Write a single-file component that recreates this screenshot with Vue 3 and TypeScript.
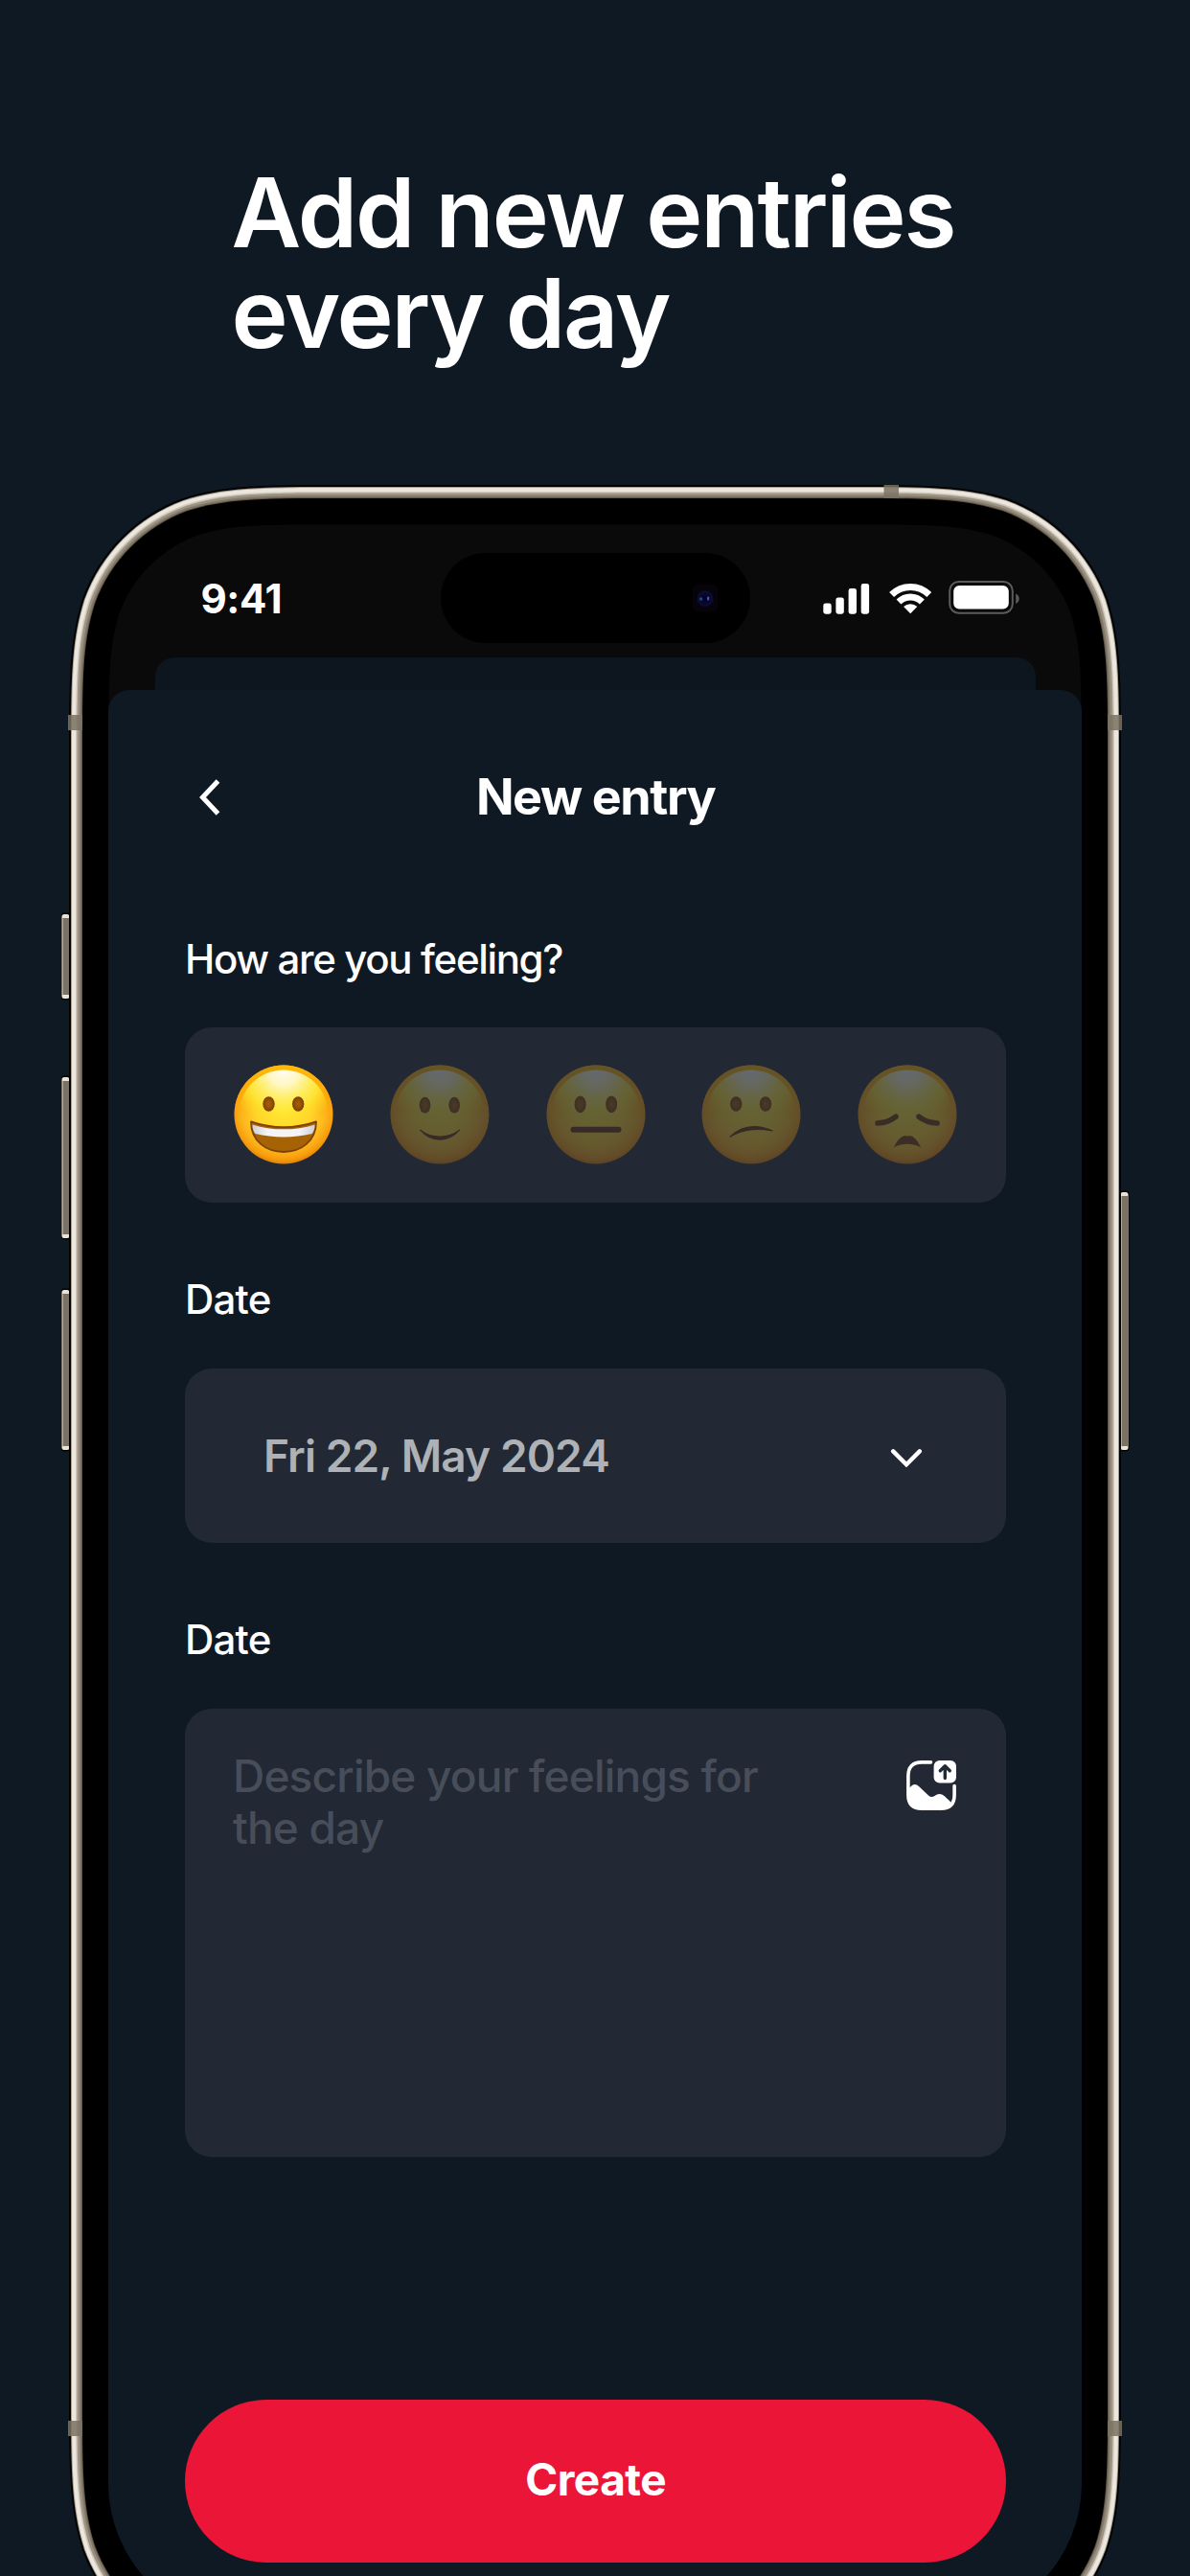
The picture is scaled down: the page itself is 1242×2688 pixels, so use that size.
<script setup lang="ts">
interface Mood {
  name: 'grin' | 'smile' | 'neutral' | 'confused' | 'sad'
  label: string
}

const moods: Mood[] = [
  { name: 'grin', label: 'Great' },
  { name: 'smile', label: 'Good' },
  { name: 'neutral', label: 'Okay' },
  { name: 'confused', label: 'Meh' },
  { name: 'sad', label: 'Bad' },
]
const selected: Mood['name'] = 'grin'

const WIDTH = 1098
const HEIGHT = 2274

// Continuous-curvature rounded rectangle, inset evenly from the phone's outline.
function squircle(inset: number, r: number): string {
  const x0 = inset
  const y0 = inset
  const x1 = WIDTH - inset
  const y1 = HEIGHT - inset
  const a = 1.528665 * r
  const b = 1.088493 * r
  const c = 0.868407 * r
  const d = 0.631494 * r
  const e = 0.074911 * r
  const f = 0.372824 * r
  const g = 0.16906 * r
  return [
    `M${x0 + a} ${y0}H${x1 - a}`,
    `C${x1 - b} ${y0} ${x1 - c} ${y0} ${x1 - d} ${y0 + e}`,
    `C${x1 - f} ${y0 + g} ${x1 - g} ${y0 + f} ${x1 - e} ${y0 + d}`,
    `C${x1} ${y0 + c} ${x1} ${y0 + b} ${x1} ${y0 + a}`,
    `V${y1 - a}`,
    `C${x1} ${y1 - b} ${x1} ${y1 - c} ${x1 - e} ${y1 - d}`,
    `C${x1 - g} ${y1 - f} ${x1 - f} ${y1 - g} ${x1 - d} ${y1 - e}`,
    `C${x1 - c} ${y1} ${x1 - b} ${y1} ${x1 - a} ${y1}`,
    `H${x0 + a}`,
    `C${x0 + b} ${y1} ${x0 + c} ${y1} ${x0 + d} ${y1 - e}`,
    `C${x0 + f} ${y1 - g} ${x0 + g} ${y1 - f} ${x0 + e} ${y1 - d}`,
    `C${x0} ${y1 - c} ${x0} ${y1 - b} ${x0} ${y1 - a}`,
    `V${y0 + a}`,
    `C${x0} ${y0 + b} ${x0} ${y0 + c} ${x0 + e} ${y0 + d}`,
    `C${x0 + g} ${y0 + f} ${x0 + f} ${y0 + g} ${x0 + d} ${y0 + e}`,
    `C${x0 + c} ${y0} ${x0 + b} ${y0} ${x0 + a} ${y0}Z`,
  ].join('')
}

const shells = [
  { inset: 0, r: 188, fill: '#020202' },
  { inset: 2, r: 186, fill: '#a69d8e' },
  { inset: 3, r: 185, fill: '#ece7de' },
  { inset: 7, r: 181, fill: '#cfc7ba' },
  { inset: 8.5, r: 179.5, fill: '#9d9384' },
  { inset: 11, r: 177, fill: '#837969' },
  { inset: 13, r: 175, fill: '#5b5447' },
  { inset: 14, r: 174, fill: '#000000' },
  { inset: 41.5, r: 147, fill: '#0a0a0a' },
].map((s) => ({ d: squircle(s.inset, s.r), fill: s.fill }))

const sideKeys = [
  { x: -7.5, y: 448, h: 88 },
  { x: -7.5, y: 618, h: 168 },
  { x: -7.5, y: 840, h: 167 },
  { x: 1097.5, y: 738, h: 269 },
]

const bands = [
  { x: -1, y: 240, w: 15, h: 16 },
  { x: 1084, y: 240, w: 15, h: 16 },
  { x: -1, y: 2020, w: 15, h: 16 },
  { x: 1084, y: 2020, w: 15, h: 16 },
  { x: 850.5, y: 0, w: 15.5, h: 14 },
]
</script>

<template>
  <main class="page">
    <h1 class="headline">Add new entries<br />every day</h1>

    <section class="phone">
      <svg class="frame" viewBox="-10 0 1118 2274" width="1118" height="2274" aria-hidden="true">
        <g v-for="(k, i) in sideKeys" :key="'k' + i">
          <rect :x="k.x - 0.5" :y="k.y - 1.5" width="9.5" :height="k.h + 3" rx="3" fill="#020202" />
          <rect :x="k.x" :y="k.y" width="8" :height="k.h" rx="2.5" fill="#e9e3d8" />
          <rect :x="k.x + 1" :y="k.y + 4" width="6.5" :height="k.h - 8" fill="#7b7263" />
        </g>
        <path v-for="(s, i) in shells" :key="'s' + i" :d="s.d" :fill="s.fill" />
        <rect
          v-for="(b, i) in bands"
          :key="'b' + i"
          :x="b.x"
          :y="b.y"
          :width="b.w"
          :height="b.h"
          fill="#7a7263"
          fill-opacity="0.85"
        />
      </svg>

      <div class="screen">
        <header class="status">
          <span class="time">9:41</span>
          <div class="island">
            <svg width="26" height="28" viewBox="0 0 26 28">
              <rect width="26" height="28" rx="5" fill="#06030a" />
              <circle cx="13" cy="14.5" r="8.6" fill="#0e0b2b" />
              <circle cx="13" cy="14.5" r="6" fill="#07063a" />
              <circle cx="13" cy="14.5" r="3" fill="#03031c" />
              <circle cx="8.6" cy="15" r="1.8" fill="#1d4a73" />
              <rect x="15" y="12.5" width="2.2" height="4" rx="1" fill="#5051b0" />
            </svg>
          </div>
          <svg class="radios" width="206" height="36" viewBox="859 606 206 36" fill="#fff">
            <rect x="859.3" y="629.5" width="8.4" height="11.2" rx="2.4" />
            <rect x="872.4" y="623.4" width="8.4" height="17.3" rx="2.4" />
            <rect x="885.6" y="614" width="8.4" height="26.7" rx="2.4" />
            <rect x="898.7" y="609" width="8.4" height="31.7" rx="2.4" />
            <g fill="none" stroke="#fff" stroke-width="7">
              <path d="M930.6 620.6A27.8 27.8 0 0 1 969.8 620.6" />
              <path d="M938 628A17.4 17.4 0 0 1 962.4 628" />
            </g>
            <path d="M950.2 640.2L943.1 633.1A10.4 10.4 0 0 1 957.3 633.1Z" />
            <rect x="991.2" y="607" width="65.6" height="32.8" rx="9.5" fill="none" stroke="#5b5b5b" stroke-width="2" />
            <rect x="995.2" y="611" width="57.6" height="24.6" rx="6" />
            <path d="M1060.2 619.5C1064.9 621.5 1064.9 628 1060.2 630Z" fill="#5b5b5b" />
          </svg>
        </header>

        <div class="sheet-behind"></div>
        <div class="sheet">
          <div class="titlebar">
            <svg class="back" width="30" height="44" viewBox="0 0 30 44" fill="none">
              <path d="M21.5 5L5.5 22L21.5 39" stroke="#fff" stroke-width="5" />
            </svg>
            <h2>New entry</h2>
          </div>

          <div class="field">
            <div class="label">How are you feeling?</div>
            <div class="card moods">
              <svg
                v-for="m in moods"
                :key="m.name"
                :class="{ dim: m.name !== selected }"
                width="104"
                height="104"
                viewBox="-52 -52 104 104"
                role="img"
                :aria-label="m.label"
              >
                <defs>
                  <radialGradient :id="'base-' + m.name" gradientUnits="userSpaceOnUse" cx="0" cy="-6" r="59">
                    <stop offset="0" stop-color="#ffe22e" />
                    <stop offset="0.5" stop-color="#ffd42a" />
                    <stop offset="0.74" stop-color="#fdb91e" />
                    <stop offset="0.9" stop-color="#f79b0c" />
                    <stop offset="1" stop-color="#d97700" />
                  </radialGradient>
                  <linearGradient :id="'rim-' + m.name" x1="0" y1="0" x2="0" y2="1">
                    <stop offset="0" stop-color="#ffb908" />
                    <stop offset="0.3" stop-color="#ffa600" stop-opacity="0.6" />
                    <stop offset="0.55" stop-color="#ff9d00" stop-opacity="0" />
                  </linearGradient>
                  <radialGradient :id="'shine-' + m.name" gradientUnits="userSpaceOnUse" cx="0" cy="-46" r="60">
                    <stop offset="0" stop-color="#fffdf0" />
                    <stop offset="0.25" stop-color="#fffbd0" stop-opacity="0.95" />
                    <stop offset="0.5" stop-color="#fff670" stop-opacity="0.85" />
                    <stop offset="0.7" stop-color="#fdf03a" stop-opacity="0.75" />
                    <stop offset="1" stop-color="#ffe42c" stop-opacity="0" />
                  </radialGradient>
                  <linearGradient :id="'teeth-' + m.name" x1="0" y1="0" x2="1" y2="0">
                    <stop offset="0" stop-color="#cfd0d6" />
                    <stop offset="0.25" stop-color="#f4f4f8" />
                    <stop offset="0.75" stop-color="#f4f4f8" />
                    <stop offset="1" stop-color="#cfd0d6" />
                  </linearGradient>
                  <radialGradient :id="'eye-' + m.name">
                    <stop offset="0" stop-color="#a45f06" />
                    <stop offset="0.5" stop-color="#965204" />
                    <stop offset="1" stop-color="#7c3d02" />
                  </radialGradient>
                </defs>
                <circle r="51.5" :fill="`url(#base-${m.name})`" />
                <circle r="51.5" :fill="`url(#rim-${m.name})`" />
                <circle r="46.5" :fill="`url(#shine-${m.name})`" />

                <g v-if="m.name === 'grin'">
                  <ellipse cx="-15.5" cy="-11" rx="6.2" ry="7.8" :fill="`url(#eye-${m.name})`" />
                  <ellipse cx="15.2" cy="-11" rx="6.2" ry="7.8" :fill="`url(#eye-${m.name})`" />
                  <path d="M-34 7.4C-12 15 12 15 34 7.4C34 28 18 39 0 39C-18 39-34 28-34 7.4Z" fill="#a56306" stroke="#804004" stroke-width="1.8" stroke-linejoin="round" />
                  <path d="M-32.6 10.4C-12 17 12 17 32.6 10.4Q32.4 17 29.6 20C10 24.5-10 24.5-29.6 20Q-32.4 17-32.6 10.4Z" :fill="`url(#teeth-${m.name})`" />
                </g>
                <g v-else-if="m.name === 'smile'">
                  <ellipse cx="-15.5" cy="-9.8" rx="5.8" ry="8.4" :fill="`url(#eye-${m.name})`" />
                  <ellipse cx="15.2" cy="-9.8" rx="5.8" ry="8.4" :fill="`url(#eye-${m.name})`" />
                  <path d="M-20.6 16C-9 29.5 9 29.5 20.8 16C9 25.5-9 25.5-20.6 16Z" fill="#6b2f0c" stroke="#6b2f0c" stroke-width="1.1" stroke-linejoin="round" />
                </g>
                <g v-else-if="m.name === 'neutral'">
                  <ellipse cx="-16.4" cy="-10.7" rx="6" ry="8.9" :fill="`url(#eye-${m.name})`" />
                  <ellipse cx="16.2" cy="-10.7" rx="6" ry="8.9" :fill="`url(#eye-${m.name})`" />
                  <rect x="-26.5" y="12.8" width="53" height="6" rx="3" fill="#6b2f0c" />
                </g>
                <g v-else-if="m.name === 'confused'">
                  <ellipse cx="-15.8" cy="-11" rx="6.2" ry="7.8" :fill="`url(#eye-${m.name})`" />
                  <ellipse cx="15" cy="-11" rx="6.2" ry="7.8" :fill="`url(#eye-${m.name})`" />
                  <path d="M-22 23.2C-9 10.5 6 10.2 22.4 16.9C6 14.3-8 14.6-22 23.2Z" fill="#6b2f0c" stroke="#6b2f0c" stroke-width="1.1" stroke-linejoin="round" />
                </g>
                <g v-else>
                  <path d="M-31 9Q-20 8.4-12 2.2" fill="none" stroke="#74380a" stroke-width="5.6" stroke-linecap="round" />
                  <path d="M31 9Q20 8.4 12 2.2" fill="none" stroke="#74380a" stroke-width="5.6" stroke-linecap="round" />
                  <path d="M-14.2 34.4C-7 19-.5 22.6 0 22.6C.5 22.6 7 19 14.2 34.4C6 29.6-6 29.6-14.2 34.4Z" fill="#7a3c0a" />
                </g>
              </svg>
            </div>
          </div>

          <div class="field">
            <div class="label short">Date</div>
            <div class="card date">
              <span>Fri 22, May 2024</span>
              <svg width="36" height="24" viewBox="0 0 36 24" fill="none">
                <path d="M4.2 4.4L18 18.2L31.8 4.4" stroke="#fff" stroke-width="4.4" stroke-linecap="round" />
              </svg>
            </div>
          </div>

          <div class="field">
            <div class="label short">Date</div>
            <div class="card note">
              <p>Describe your feelings for<br />the day</p>
              <svg width="52" height="52" viewBox="0 0 52 52">
                <path d="M25.5 1.9H16Q1.9 1.9 1.9 16V36Q1.9 50.1 16 50.1H36Q50.1 50.1 50.1 36V26.5" fill="none" stroke="#fff" stroke-width="3.6" stroke-linecap="round" />
                <path d="M2 29.5L6 26Q9.5 23.5 13 27L23 36.5Q26 39.3 29.5 37L31 36Q35.5 33.6 39.5 37L46.5 43.5Q44 50.5 36 50.5H16Q2 50.5 2 36Z" fill="#fff" />
                <rect x="28.6" y="0" width="23.4" height="23.4" rx="6" fill="#fff" />
                <path d="M40.3 18.5V7M35.3 10.8L40.3 5.8L45.3 10.8" fill="none" stroke="#222934" stroke-width="3.4" stroke-linecap="round" stroke-linejoin="round" />
              </svg>
            </div>
          </div>

          <button class="create" type="button">Create</button>
        </div>
      </div>
    </section>
  </main>
</template>

<style>
body {
  margin: 0;
  background: #0f1924;
}
</style>

<style scoped>
.page {
  width: 1242px;
  height: 2688px;
  overflow: hidden;
  box-sizing: border-box;
  padding-top: 169px;
  background: #0f1924;
  color: #fff;
  font-family: Inter, 'Liberation Sans', sans-serif;
}
.headline {
  margin: 0 0 127px 241.5px;
  font-size: 100px;
  line-height: 105px;
  font-weight: 600;
  letter-spacing: -2.05px;
  white-space: nowrap;
}
.phone {
  position: relative;
  width: 1098px;
  height: 2274px;
  margin-left: 72.3px;
  box-sizing: border-box;
  padding: 42px 41px 0 40.7px;
}
.frame {
  position: absolute;
  left: -10px;
  top: 0;
}
.screen {
  position: relative;
  display: flex;
  flex-direction: column;
}
.status {
  height: 138px;
  box-sizing: border-box;
  display: grid;
  grid-template-columns: 347px 323px 1fr;
  padding-top: 28.7px;
}
.time {
  padding: 23px 0 0 96.5px;
  font-size: 42px;
  line-height: 50px;
  font-weight: 750;
  letter-spacing: -0.4px;
}
.island {
  height: 94px;
  border-radius: 47px;
  background: #000;
  display: flex;
  align-items: center;
  justify-content: flex-end;
  box-sizing: border-box;
  padding-right: 34px;
}
.radios {
  margin: 29.3px 0 0 76px;
}
.sheet-behind {
  height: 34px;
  margin: 0 48px 0 49px;
  border-radius: 20px 20px 0 0;
  background: #0d151f;
}
.sheet {
  height: 2018px;
  box-sizing: border-box;
  padding: 81px 79px 0 80px;
  border-radius: 22px 22px 147px 147px;
  background: #0f1924;
}
.titlebar {
  display: grid;
  grid-template-columns: 60px 1fr 60px;
  align-items: center;
  height: 62px;
  margin-bottom: 112.7px;
}
.back {
  margin-left: 13px;
}
h2 {
  margin: 0;
  text-align: center;
  font-size: 52px;
  line-height: 62px;
  font-weight: 700;
  letter-spacing: -1.4px;
}
.field {
  margin-bottom: 76.4px;
}
.label {
  margin-bottom: 46.6px;
  font-size: 42px;
  line-height: 50px;
  font-weight: 450;
  letter-spacing: -1.35px;
}
.label.short {
  letter-spacing: -0.8px;
}
.card {
  height: 182.4px;
  box-sizing: border-box;
  border-radius: 28px;
  background: #222934;
}
.moods {
  display: flex;
  align-items: center;
  justify-content: space-between;
  padding: 0 51px;
}
.moods svg.dim {
  opacity: 0.3;
}
.date {
  display: flex;
  align-items: center;
  justify-content: space-between;
  padding: 1px 86px 0 82px;
  font-size: 46px;
  line-height: 56px;
  font-weight: 600;
  letter-spacing: -0.9px;
  color: #aeb1b5;
}
.date svg {
  margin-top: 5px;
}
.note {
  height: 468px;
  display: flex;
  justify-content: space-between;
  align-items: flex-start;
  padding: 43.4px 52px 0 50px;
}
.note p {
  margin: 0;
  font-size: 46px;
  line-height: 54px;
  font-weight: 450;
  letter-spacing: -0.8px;
  color: #474e59;
}
.note svg {
  margin-top: 10.3px;
}
.create {
  display: block;
  width: 100%;
  height: 170px;
  margin-top: 252.7px;
  padding: 0 0 3px;
  border: 0;
  border-radius: 85px;
  background: #eb1537;
  color: #fff;
  font-family: inherit;
  font-size: 46px;
  font-weight: 700;
  letter-spacing: -0.5px;
}
</style>
